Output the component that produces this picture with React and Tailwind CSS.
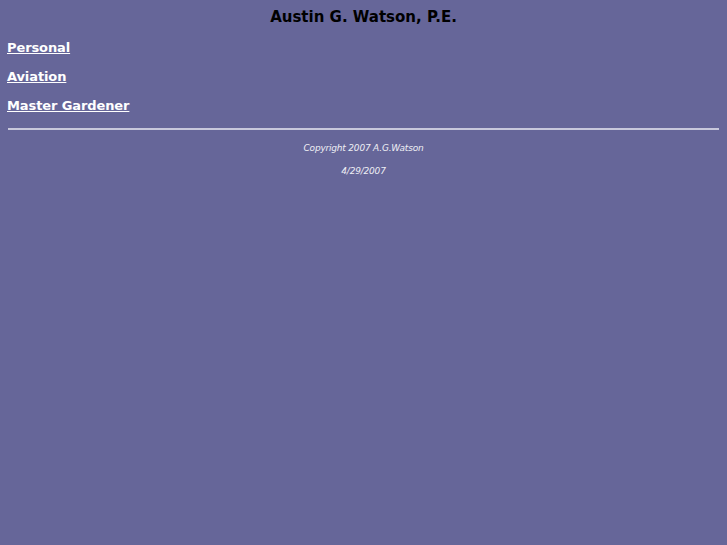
export default function App() {
  return (
    <div
      className="min-h-[545px] bg-[#666699] px-2 pt-[7px] text-black"
      style={{ fontFamily: '"DejaVu Sans", sans-serif' }}
    >
      <h1 className="text-center text-[15px] font-bold leading-[20px]">Austin G. Watson, P.E.</h1>
      <div className="mt-[12px] -ml-px flex flex-col gap-[11px] text-[13px] font-bold leading-[18px] tracking-[-0.1px]">
        <a href="#" className="self-start text-white underline">Personal</a>
        <a href="#" className="self-start text-white underline">Aviation</a>
        <a href="#" className="self-start text-white underline">Master Gardener</a>
      </div>
      <hr className="mt-[13px] border-0 border-t-2 border-[#c8c8dc]" />
      <div className="mt-[12px] flex flex-col items-center gap-[11px] text-[9px] italic leading-[12px] tracking-[-0.2px] text-[#eeeef4]">
        <p>Copyright 2007 A.G.Watson</p>
        <p>4/29/2007</p>
      </div>
    </div>
  );
}
